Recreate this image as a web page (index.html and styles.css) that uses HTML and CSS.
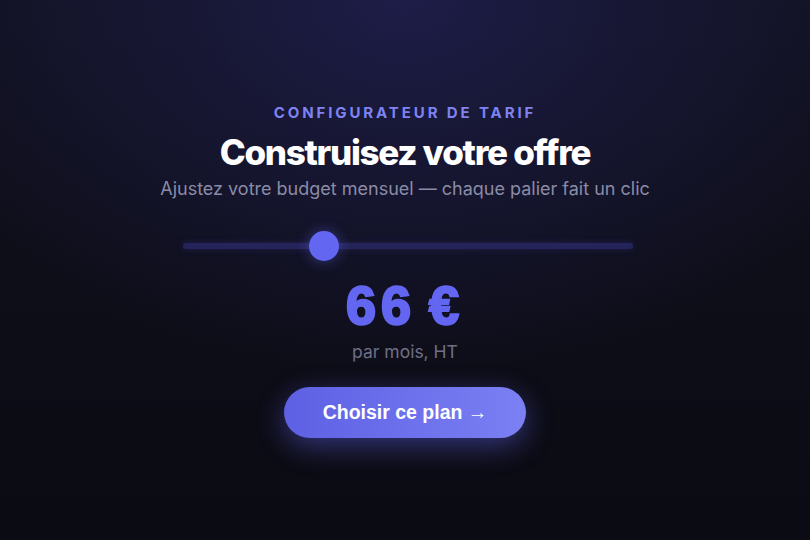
FILE: index.html
```html
<!DOCTYPE html>
<html lang="fr">
<head>
<meta charset="utf-8">
<title>Configurateur de tarif</title>
<link rel="stylesheet" href="styles.css">
</head>
<body>
<main class="page">
  <section class="config">
    <p class="eyebrow">CONFIGURATEUR DE TARIF</p>
    <h1 class="title">Construisez votre offre</h1>
    <p class="subtitle">Ajustez votre budget mensuel — chaque palier fait un clic</p>
    <div class="slider">
      <div class="track"></div>
      <div class="thumb" style="left: 31.3%"></div>
    </div>
    <div class="price">66 €</div>
    <p class="period">par mois, HT</p>
    <button class="cta">Choisir ce plan →</button>
  </section>
</main>
</body>
</html>
```
FILE: styles.css
```css
html, body {
  margin: 0;
  height: 100%;
}
body {
  background:
    radial-gradient(ellipse 520px 380px at 50% 0%, #1d1d48 0%, rgba(29,29,72,0.6) 35%, rgba(16,16,34,0) 100%),
    linear-gradient(180deg, #11111f 0%, #0b0b13 100%);
  font-family: "Inter", "Liberation Sans", sans-serif;
  color: #fff;
}
.page {
  height: 540px;
  display: flex;
  justify-content: center;
}
.config {
  display: flex;
  flex-direction: column;
  align-items: center;
  padding-top: 103px;
  width: 456px;
}
.eyebrow {
  margin: 0;
  font-size: 15px;
  font-weight: 700;
  letter-spacing: 2.9px;
  color: #7f82f2;
  line-height: 20px;
}
.title {
  margin: 9px 0 0;
  font-size: 35px;
  font-weight: 800;
  letter-spacing: -1.3px;
  line-height: 40px;
}
.subtitle {
  margin: 5px 0 0;
  font-size: 18px;
  color: #8b8ba6;
  line-height: 24px;
  white-space: nowrap;
}
.slider {
  position: relative;
  width: 450px;
  height: 30px;
  margin: 30px 0 0 6px;
  display: flex;
  align-items: center;
}
.track {
  width: 100%;
  height: 6px;
  border-radius: 3px;
  background: #25245a;
  box-shadow: 0 0 6px rgba(60,60,150,0.35);
}
.thumb {
  position: absolute;
  top: 0;
  width: 30px;
  height: 30px;
  margin-left: -15px;
  border-radius: 50%;
  background: #6366f1;
  box-shadow: 0 0 14px rgba(99,102,241,0.45);
}
.price {
  margin-top: 12px;
  font-family: "Liberation Sans", Arial, sans-serif;
  font-weight: 700;
  font-size: 54px;
  letter-spacing: 5px;
  word-spacing: -7px;
  line-height: 64px;
  color: #6366f1;
  -webkit-text-stroke: 2.4px #6366f1;
}
.period {
  margin: 3px 0 0;
  font-size: 17.5px;
  color: #6f6f86;
  line-height: 24px;
}
.cta {
  margin-top: 23px;
  width: 242px;
  height: 51px;
  border: 0;
  border-radius: 26px;
  background: linear-gradient(90deg, #5e60e4 0%, #7b80f3 100%);
  color: #fff;
  font-family: "Liberation Sans", Arial, sans-serif;
  font-weight: 700;
  font-size: 19.5px;
  box-shadow: 0 8px 28px rgba(99,102,241,0.45);
  cursor: pointer;
}
```
